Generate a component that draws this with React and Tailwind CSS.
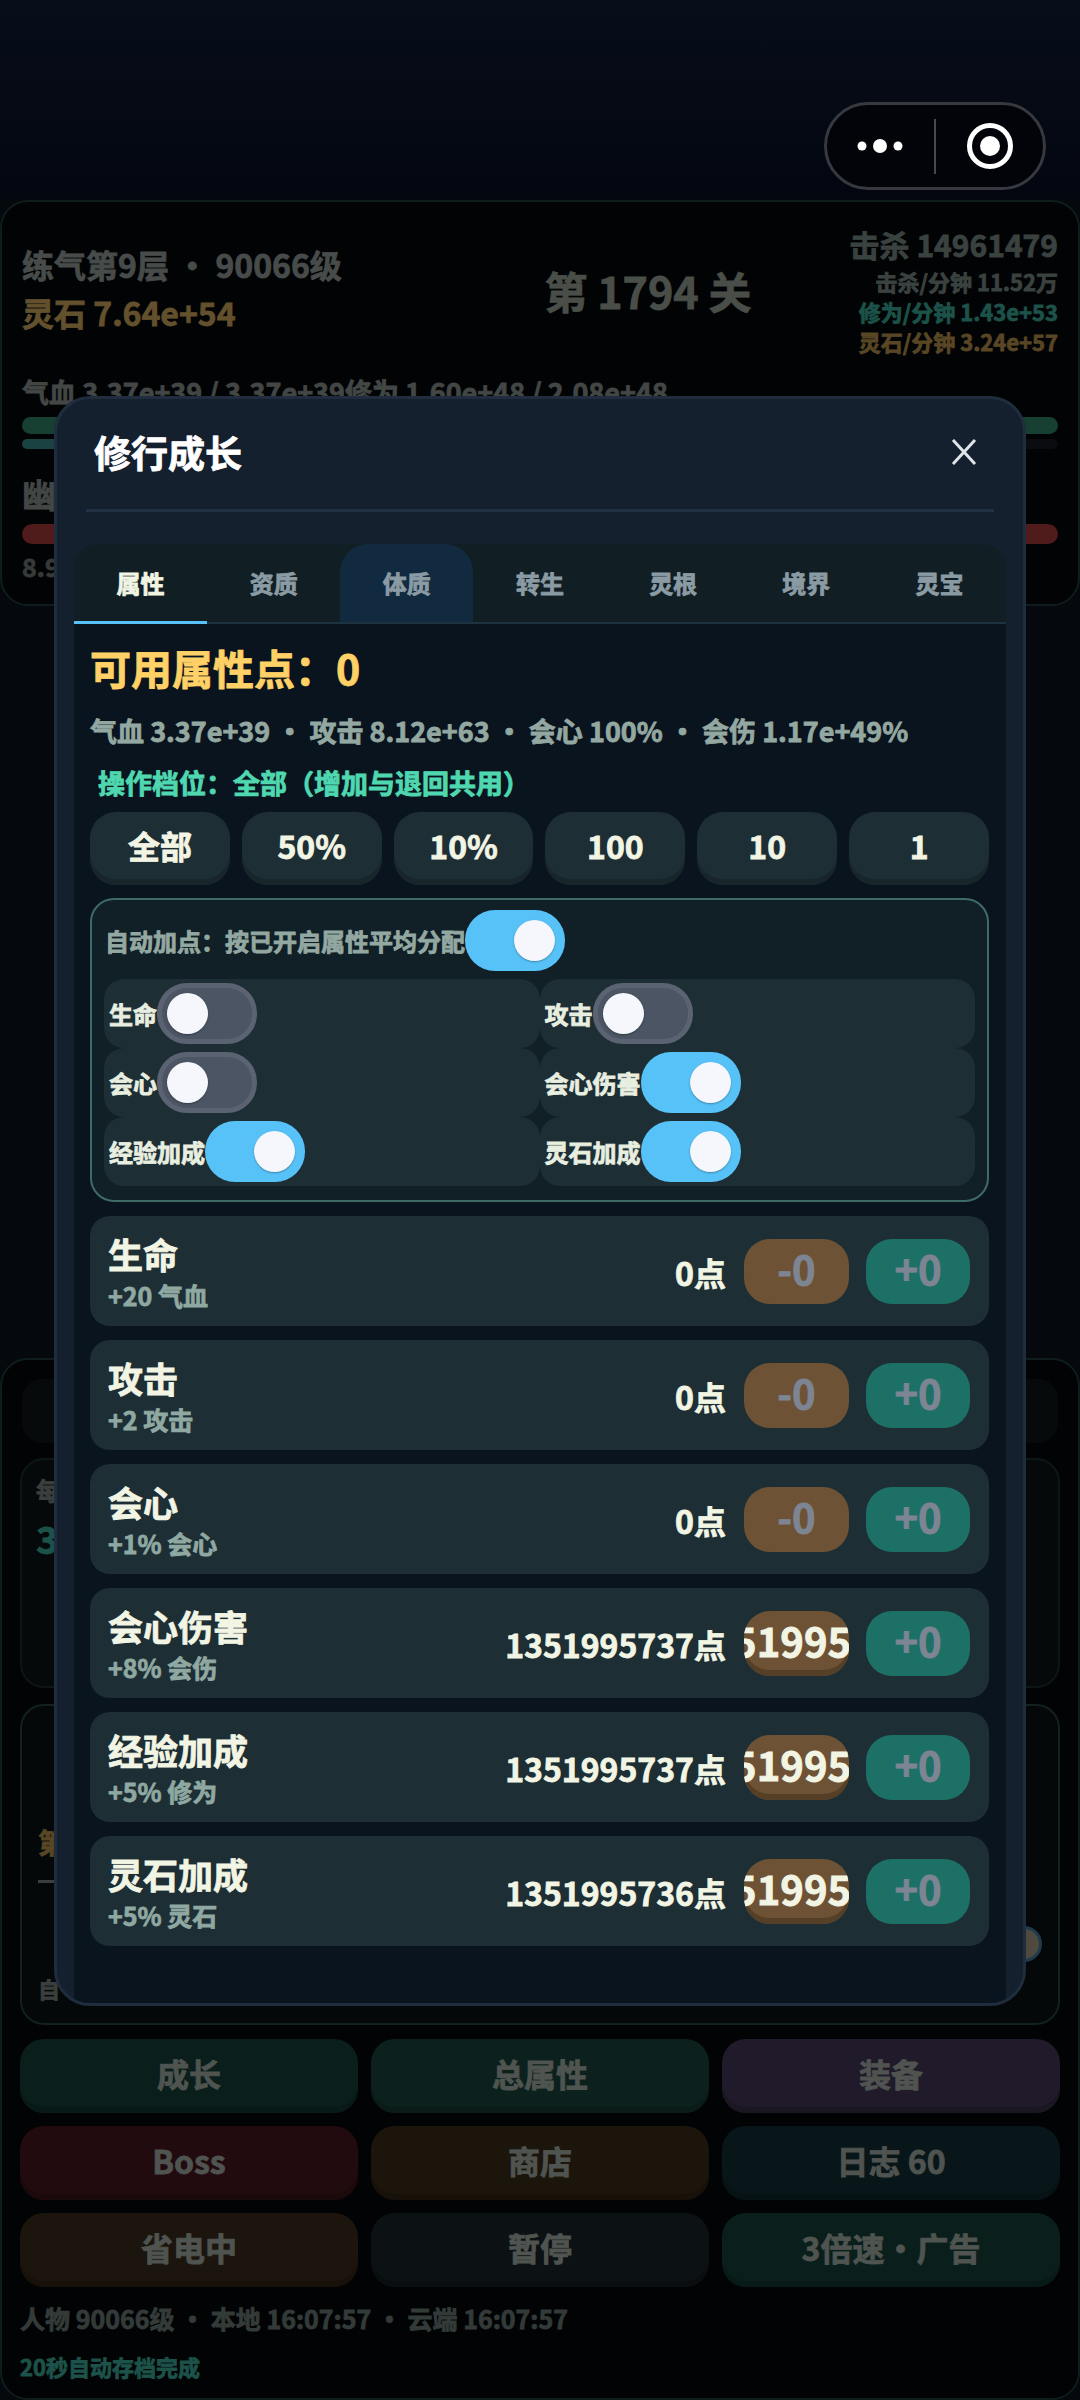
import React from "react";

const font = { fontFamily: '"Noto Sans CJK SC", "Noto Sans", sans-serif' };

function Toggle({ on }) {
  return (
    <div
      className={
        on
          ? "flex h-[61px] w-[100px] flex-none items-center justify-end rounded-[30px] bg-[#57c2f7] pr-[10px]"
          : "flex h-[61px] w-[100px] flex-none items-center justify-start rounded-[30px] border-[5px] border-[#5b6372] bg-[#4b5563] pl-[5px]"
      }
    >
      <div className="h-[41px] w-[41px] rounded-full bg-[#f5f7fc] shadow-[0_1px_2px_rgba(0,0,0,0.3)]" />
    </div>
  );
}

function ToggleRow({ label, on }) {
  return (
    <div className="flex h-[69px] items-center rounded-[20px] bg-[#1d2e35] pl-[5px]">
      <span className="whitespace-nowrap text-[24px] font-bold text-[#e8eee0]">{label}</span>
      <Toggle on={on} />
    </div>
  );
}

function StatRow({ name, sub, points, minus }) {
  return (
    <div className="flex h-[110px] items-center justify-between rounded-[20px] bg-[#1d2e35] pl-[18px] pr-[19px]">
      <div className="flex flex-col">
        <span className="text-[35px] font-bold leading-[46px] text-[#f2f5e4]">{name}</span>
        <span className="mt-[2px] text-[25px] font-bold leading-[32px] text-[#8fa8a1]">{sub}</span>
      </div>
      <div className="flex items-center">
        <span className="mt-[1px] text-[32px] font-bold text-[#f2f5e4]">{points}点</span>
        <div
          className={
            minus
              ? "ml-[18px] flex h-[65px] w-[105px] items-center justify-center overflow-hidden whitespace-nowrap rounded-[26px] bg-[#6e5235] pb-[6px] text-[40px] font-bold text-[#f2f5e4] shadow-[inset_0_-6px_0_#553f27]"
              : "ml-[18px] flex h-[65px] w-[105px] items-center justify-center overflow-hidden whitespace-nowrap rounded-[26px] bg-[#6e5235] pb-[6px] text-[40px] font-bold text-[#7d8593]"
          }
        >
          {minus || "-0"}
        </div>
        <div className="ml-[17px] flex h-[65px] w-[104px] items-center justify-center rounded-[26px] bg-[#1d7066] pb-[6px] text-[40px] font-bold text-[#7d8593]">
          +0
        </div>
      </div>
    </div>
  );
}

const tabs = ["属性", "资质", "体质", "转生", "灵根", "境界", "灵宝"];
const steps = ["全部", "50%", "10%", "100", "10", "1"];
const actions = [
  ["成长", "bg-[#0a1f1b]", "shadow-[inset_0_-6px_0_#081a17]"],
  ["总属性", "bg-[#0c211d]", "shadow-[inset_0_-6px_0_#0a1b18]"],
  ["装备", "bg-[#201a2a]", "shadow-[inset_0_-6px_0_#1a1622]"],
  ["Boss", "bg-[#210b0e]", "shadow-[inset_0_-6px_0_#1b090c]"],
  ["商店", "bg-[#1c150b]", "shadow-[inset_0_-6px_0_#171109]"],
  ["日志 60", "bg-[#081619]", "shadow-[inset_0_-6px_0_#071215]"],
  ["省电中", "bg-[#1c150d]", "shadow-[inset_0_-6px_0_#17110a]"],
  ["暂停", "bg-[#0c1114]", "shadow-[inset_0_-6px_0_#0a0e10]"],
  ["3倍速·广告", "bg-[#0a1f1b]", "shadow-[inset_0_-6px_0_#081a17]"],
];
const stats = [
  ["生命", "+20 气血", "0"],
  ["攻击", "+2 攻击", "0"],
  ["会心", "+1% 会心", "0"],
  ["会心伤害", "+8% 会伤", "1351995737", "-1351995737"],
  ["经验加成", "+5% 修为", "1351995737", "-1351995737"],
  ["灵石加成", "+5% 灵石", "1351995736", "-1351995736"],
];
const toggles = [
  ["生命", false],
  ["攻击", false],
  ["会心", false],
  ["会心伤害", true],
  ["经验加成", true],
  ["灵石加成", true],
];

function Modal() {
  return (
    <div className="absolute left-[54px] top-[396px] flex h-[1610px] w-[972px] flex-col overflow-hidden rounded-[36px] border-[3px] border-[#1f2d3f] bg-[#15202e]">
      <div className="flex h-[110px] flex-none items-start justify-between px-[37px] pt-[26px]">
        <span className="text-[37px] font-bold leading-[54px] text-white">修行成长</span>
        <svg width="28" height="28" viewBox="0 0 28 28" className="mr-[8px] mt-[13px]">
          <path d="M3 2 L25 26 M25 2 L3 26" stroke="#dfe4e8" strokeWidth="3" fill="none" />
        </svg>
      </div>
      <div className="mx-[29px] h-[3px] flex-none bg-[#223043]" />
      <div className="mx-[17px] mt-[32px] flex h-[80px] flex-none rounded-t-[24px] border-b-[2px] border-[#1f3240] bg-[#111f25]">
        {tabs.map((t, i) => (
          <div
            key={t}
            className={
              "relative flex flex-1 items-center justify-center rounded-t-[28px] text-[24px] font-bold " +
              (i === 0 ? "text-[#f2f5e4] " : "text-[#8a9ba3] ") +
              (i === 2 ? "bg-[#112a40]" : "")
            }
          >
            {t}
            {i === 0 && <div className="absolute bottom-[-2px] left-0 right-0 h-[3px] bg-[#57c2f7]" />}
          </div>
        ))}
      </div>
      <div className="mx-[17px] flex flex-1 flex-col bg-[#0a141e] pl-[16px] pr-[17px]">
        <div className="mt-[17px] text-[41px] font-bold leading-[52px] text-[#ffd166]">可用属性点：0</div>
        <div className="mt-[19px] text-[27px] font-bold leading-[38px] text-[#93a8a1]">
          气血 3.37e+39 · 攻击 8.12e+63 · 会心 100% · 会伤 1.17e+49%
        </div>
        <div className="mt-[15px] pl-[8px] text-[27px] font-bold leading-[36px] text-[#4fd8b0]">
          操作档位：全部（增加与退回共用）
        </div>
        <div className="mt-[11px] grid grid-cols-6 gap-[12px]">
          {steps.map((s) => (
            <div
              key={s}
              className="flex h-[73px] items-center justify-center rounded-[26px] bg-[#1d2e35] pb-[8px] text-[32px] font-bold text-[#f2f5e4] shadow-[inset_0_-6px_0_#18262c]"
            >
              {s}
            </div>
          ))}
        </div>
        <div className="mt-[13px] h-[304px] rounded-[24px] border-[2px] border-[#3f6b66] bg-[#111f26] pl-[12px] pr-[12px] pt-[10px]">
          <div className="flex h-[61px] items-center pl-[1px]">
            <span className="whitespace-nowrap text-[24px] font-bold text-[#93a8a1]">自动加点：按已开启属性平均分配</span>
            <Toggle on />
          </div>
          <div className="mt-[8px] grid grid-cols-2">
            {toggles.map(([l, on]) => (
              <ToggleRow key={l} label={l} on={on} />
            ))}
          </div>
        </div>
        <div className="mt-[14px] flex flex-col gap-[14px]">
          {stats.map(([n, s, p, m]) => (
            <StatRow key={n} name={n} sub={s} points={p} minus={m} />
          ))}
        </div>
      </div>
    </div>
  );
}

export default function App() {
  return (
    <div style={font} className="relative h-[2400px] w-[1080px] overflow-hidden bg-[#05090d] [-webkit-text-stroke:0.8px]">
      <div className="flex h-[200px] items-start justify-end bg-[linear-gradient(180deg,#070e1a,#03060f)] pr-[34px] pt-[102px]">
        <div className="flex h-[88px] w-[222px] items-center rounded-full border-[3px] border-[#36393f] bg-[#02040a]">
          <svg width="46" height="16" viewBox="0 0 46 16" className="ml-[30px]">
            <circle cx="5" cy="8" r="4.5" fill="#fff" />
            <circle cx="23" cy="8" r="7" fill="#fff" />
            <circle cx="41" cy="8" r="4.5" fill="#fff" />
          </svg>
          <div className="ml-[31px] h-[55px] w-[2px] bg-[#46494f]" />
          <svg width="48" height="48" viewBox="0 0 48 48" className="ml-[30px]">
            <circle cx="24" cy="24" r="20.5" stroke="#fff" strokeWidth="5" fill="none" />
            <circle cx="24" cy="24" r="10" fill="#fff" />
          </svg>
        </div>
      </div>

      <div className="h-[406px] rounded-[28px] border-[2px] border-[#0e1c1c] bg-[#020304] px-[20px] pt-[20px]">
        <div className="flex items-start">
          <div className="w-[518px] pt-[20px]">
            <div className="text-[32px] font-bold leading-[44px] text-[#474c4a]">练气第9层 · 90066级</div>
            <div className="mt-[4px] text-[32px] font-bold leading-[44px] text-[#63502c]">灵石 7.64e+54</div>
          </div>
          <div className="mt-[40px] w-[216px] whitespace-nowrap text-center text-[43px] font-bold leading-[56px] text-[#4a4e48]">第 1794 关</div>
          <div className="ml-auto flex flex-col items-end">
            <div className="text-[30px] font-bold leading-[44px] text-[#3a4240]">击杀 14961479</div>
            <div className="text-[22px] font-bold leading-[30px] text-[#3a4240]">击杀/分钟 11.52万</div>
            <div className="text-[22px] font-bold leading-[30px] text-[#1c5249]">修为/分钟 1.43e+53</div>
            <div className="text-[22px] font-bold leading-[30px] text-[#584625]">灵石/分钟 3.24e+57</div>
          </div>
        </div>
        <div className="mt-[18px] text-[27px] font-bold leading-[36px] text-[#424745]">气血 3.37e+39 / 3.37e+39修为 1.60e+48 / 2.08e+48</div>
        <div className="mt-[7px] h-[17px] rounded-full bg-[#174032]" />
        <div className="mt-[5px] h-[10px] rounded-full bg-[#0a0c10]">
          <div className="h-full w-[40%] rounded-full bg-[#1a4242]" />
        </div>
        <div className="mt-[21px] text-[34px] font-bold leading-[48px] text-[#424745]">幽</div>
        <div className="mt-[6px] h-[20px] rounded-full bg-[#501b1b]" />
        <div className="mt-[4px] text-[25px] font-bold leading-[36px] text-[#363a39]">8.9</div>
      </div>

      <div className="mt-[752px] h-[1042px] rounded-[28px] border-[2px] border-[#0e1c1c] bg-[#020304] px-[18px] pt-[19px]">
        <div className="mx-[2px] h-[64px] rounded-[20px] bg-[#060a0b]" />
        <div className="mt-[15px] h-[230px] rounded-[24px] border-[2px] border-[#0d1616] bg-[#050909] pl-[14px] pt-[14px]">
          <div className="text-[24px] font-bold leading-[32px] text-[#3a3f3d]">每</div>
          <div className="mt-[10px] text-[38px] font-bold leading-[44px] text-[#1c5249]">3</div>
        </div>
        <div className="relative mt-[16px] h-[321px] rounded-[24px] border-[2px] border-[#12211f] bg-[#040808] pl-[16px] pt-[118px]">
          <div className="text-[28px] font-bold leading-[36px] text-[#584625]">第</div>
          <div className="mt-[20px] h-[3px] w-[40px] bg-[#3a3f3d]" />
          <div className="absolute right-[16px] top-[220px] h-[36px] w-[36px] rounded-full border-[3px] border-[#1f3a4a] bg-[#4f4a40]" />
          <div className="mt-[90px] text-[22px] font-bold leading-[30px] text-[#3a3f3d]">自</div>
        </div>
        <div className="mt-[14px] grid grid-cols-3 gap-x-[13px] gap-y-[13px]">
          {actions.map(([t, bg, sh]) => (
            <div key={t} className={"flex h-[74px] items-center justify-center rounded-[24px] pb-[6px] text-[32px] font-bold text-[#4f5450] " + bg + " " + sh}>
              {t}
            </div>
          ))}
        </div>
        <div className="mt-[14px] text-[25px] font-bold leading-[34px] text-[#333b39]">人物 90066级 · 本地 16:07:57 · 云端 16:07:57</div>
        <div className="mt-[14px] text-[22px] font-bold leading-[34px] text-[#1c5249]">20秒自动存档完成</div>
      </div>

      <Modal />
    </div>
  );
}
